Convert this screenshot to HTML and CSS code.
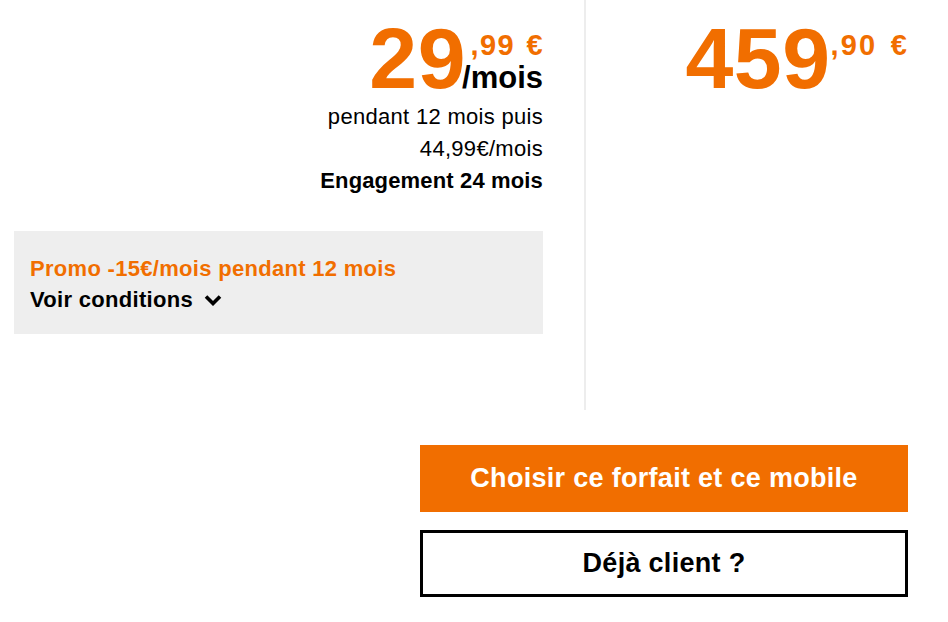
FILE: index.html
```html
<!DOCTYPE html>
<html lang="fr">
<head>
<meta charset="utf-8">
<title>Offre</title>
<link rel="stylesheet" href="styles.css">
</head>
<body>
<main class="page">
  <section class="offers">
    <div class="col col-left">
      <div class="price">
        <span class="price-int price-int-tight">29</span>
        <span class="price-side">
          <span class="price-dec">,99 €</span>
          <span class="price-unit">/mois</span>
        </span>
      </div>
      <div class="details">
        <p class="line">pendant 12 mois puis</p>
        <p class="line">44,99€/mois</p>
        <p class="line strong">Engagement 24 mois</p>
      </div>
      <div class="promo">
        <p class="promo-title">Promo -15€/mois pendant 12 mois</p>
        <p class="promo-link">Voir conditions
          <svg class="chev" width="18" height="12" viewBox="0 0 18 12" aria-hidden="true"><path d="M2 2.5 L9 9.5 L16 2.5" fill="none" stroke="#000" stroke-width="3.6"/></svg>
        </p>
      </div>
    </div>
    <div class="col col-right">
      <div class="price">
        <span class="price-int">459</span>
        <span class="price-side">
          <span class="price-dec price-dec-wide">,90 €</span>
        </span>
      </div>
    </div>
  </section>
  <section class="actions">
    <button class="btn btn-primary">Choisir ce forfait et ce mobile</button>
    <button class="btn btn-outline">Déjà client ?</button>
  </section>
</main>
</body>
</html>
```
FILE: styles.css
```css
* { box-sizing: border-box; }
html, body { margin: 0; padding: 0; background: #fff; }
body {
  font-family: "Liberation Sans", Arial, Helvetica, sans-serif;
  color: #000;
  width: 948px;
  height: 622px;
  overflow: hidden;
}
p { margin: 0; }

.offers {
  display: grid;
  grid-template-columns: 586px 1fr;
  height: 410px;
}
.col-left {
  padding: 15px 41px 0 14px;
  border-right: 2px solid #ededed;
  display: flex;
  flex-direction: column;
  align-items: stretch;
}
.col-right {
  padding: 15px 40px 0 0;
  display: flex;
  flex-direction: column;
}

.price {
  display: flex;
  justify-content: flex-end;
  align-items: flex-start;
  color: #f16e00;
  font-weight: bold;
}
.price-int {
  font-size: 86px;
  line-height: 86px;
  letter-spacing: 0.5px;
}
.price-int-tight { margin-right: -4px; }
.price-side {
  display: flex;
  flex-direction: column;
  align-items: flex-end;
  padding-top: 16px;
}
.price-dec {
  font-size: 29px;
  line-height: 29px;
  letter-spacing: 1.4px;
  word-spacing: 2px;
  margin-right: -1px;
}
.price-dec-wide { letter-spacing: 2.2px; word-spacing: 3px; }
.price-unit {
  font-size: 31px;
  line-height: 31px;
  color: #000;
  margin-top: 2px;
}

.details {
  text-align: right;
  font-size: 22px;
  line-height: 32px;
  letter-spacing: 0.3px;
}
.strong { font-weight: bold; letter-spacing: 0.15px; }

.promo {
  margin-top: 34px;
  background: #eeeeee;
  height: 103px;
  padding: 22px 16px 0 16px;
  font-weight: bold;
  font-size: 22px;
  line-height: 31px;
  letter-spacing: 0.3px;
}
.promo-title { color: #f16e00; }
.promo-link {
  display: flex;
  align-items: center;
  gap: 11px;
}
.chev { display: block; }

.actions {
  margin-top: 35px;
  padding-right: 40px;
  display: flex;
  flex-direction: column;
  align-items: flex-end;
  gap: 18px;
}
.btn {
  width: 488px;
  height: 67px;
  font-family: "Liberation Sans", Arial, Helvetica, sans-serif;
  font-weight: bold;
  font-size: 27px;
  letter-spacing: 0.3px;
  border: none;
  padding: 0;
  cursor: pointer;
}
.btn-primary {
  background: #f16e00;
  color: #fff;
}
.btn-outline {
  background: #fff;
  color: #000;
  border: 3px solid #000;
}
```
